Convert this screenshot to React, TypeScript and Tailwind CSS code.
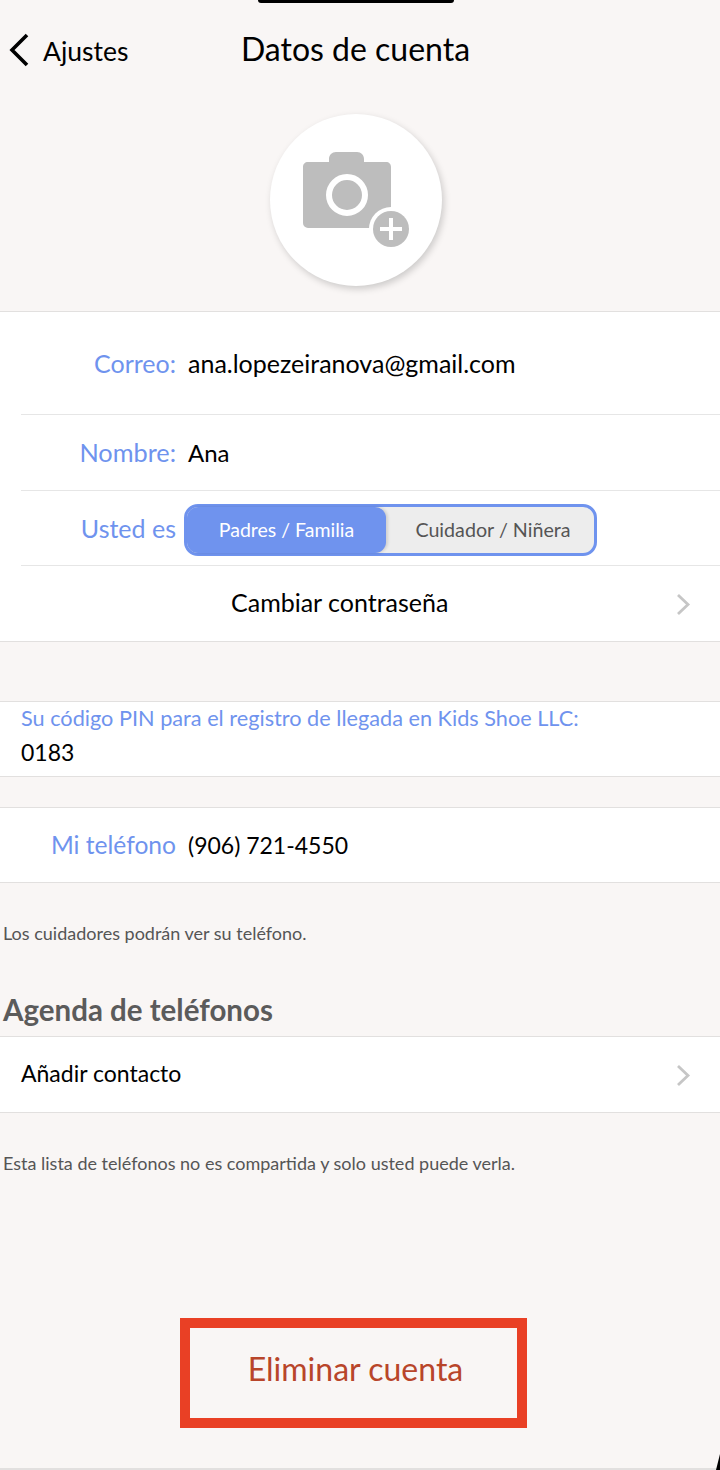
const font = "font-['Lato','Noto_Sans',sans-serif]";

function CameraIcon() {
  return (
    <svg width="116" height="100" viewBox="0 0 116 100" className="block">
      <path
        d="M5 10h21V7c0-4 3-7 7-7h21c4 0 7 3 7 7v3h22c3 0 5 2 5 5v56a5 5 0 0 1-5 5H5a5 5 0 0 1-5-5V15c0-3 2-5 5-5z"
        fill="#bdbdbd"
      />
      <circle cx="44" cy="43" r="18" fill="#bdbdbd" stroke="#fff" stroke-width="6" />
      <circle cx="88" cy="77" r="22" fill="#fff" />
      <circle cx="88" cy="77" r="18" fill="#bdbdbd" />
      <path d="M88 66v22M77 77h22" stroke="#fff" stroke-width="4" />
    </svg>
  );
}

function Chevron() {
  return (
    <svg width="16" height="24" viewBox="0 0 16 24" className="mr-[29px] shrink-0">
      <path d="M3 3l10 9.500L3 22" fill="none" stroke="#c6c6c6" stroke-width="2.800" />
    </svg>
  );
}

function Row({ label, value, labelSize, valueSize, className }: { label: string; value: string; labelSize: string; valueSize: string; className: string }) {
  return (
    <div className={`flex items-center ${className}`}>
      <span className={`w-[176px] shrink-0 text-right text-[#6f93ee] ${labelSize}`}>{label}</span>
      <span className={`ml-[12px] text-black ${valueSize}`}>{value}</span>
    </div>
  );
}

export default function App() {
  return (
    <div className={`relative h-[1470px] w-[720px] overflow-hidden bg-[#f9f6f5] ${font}`}>
      <div className="absolute left-[258px] top-0 h-[3px] w-[196px] rounded-b-lg bg-black" />

      <header className="relative h-[114px]">
        <svg width="24" height="36" viewBox="0 0 24 36" className="absolute left-[7px] top-[32px]">
          <path d="M20 3 5 18l15 15" fill="none" stroke="#000" stroke-width="3.6" />
        </svg>
        <span className="absolute left-[43px] top-[35px] text-[26.500px] leading-[32px] text-black">Ajustes</span>
        <h1 className="pt-[29px] pr-[9px] text-center text-[32px] leading-[40px] font-normal text-black">Datos de cuenta</h1>
      </header>

      <div className="flex h-[197px] justify-center pr-[8px]">
        <div className="flex h-[172px] w-[172px] items-start justify-center rounded-full bg-white pt-[38px] pl-[10px] shadow-[2px_3px_7px_rgba(0,0,0,0.18)]">
          <CameraIcon />
        </div>
      </div>

      <section className="border-y border-[#e2e0df] bg-white">
        <Row label="Correo:" value="ana.lopezeiranova@gmail.com" labelSize="text-[25px]" valueSize="text-[25px]" className="h-[102px] pt-[1px]" />
        <div className="ml-[21px] border-t border-[#e6e6e6]">
          <div className="-ml-[21px]">
            <Row label="Nombre:" value="Ana" labelSize="text-[25.300px]" valueSize="text-[24px]" className="h-[75px]" />
          </div>
        </div>
        <div className="ml-[21px] flex h-[75px] items-center border-t border-[#e6e6e6]">
          <span className="w-[155px] shrink-0 pt-[2px] text-right text-[25px] text-[#6f93ee]">Usted es</span>
          <div className="mt-[4px] ml-[8px] flex h-[52px] w-[413px] rounded-[14px] border-[3px] border-[#6f93ee] bg-[#ededed]">
            <div className="flex w-[199px] items-center justify-center rounded-[11px] bg-[#6f93ee] text-[19.500px] text-white shadow-[2px_0_3px_rgba(0,0,0,0.12)]">
              Padres / Familia
            </div>
            <div className="flex flex-1 items-center justify-center pl-[6px] text-[19.700px] text-[#555555]">Cuidador / Niñera</div>
          </div>
        </div>
        <div className="ml-[21px] flex h-[76px] items-center border-t border-[#e6e6e6]">
          <span className="flex-1 pb-[2px] pl-[210px] text-[25px] text-black">Cambiar contraseña</span>
          <Chevron />
        </div>
      </section>

      <section className="mt-[59px] h-[76px] border-y border-[#e2e0df] bg-white pl-[21px]">
        <p className="pt-[3px] text-[21.700px] leading-[26px] text-[#6f93ee]">
          Su código PIN para el registro de llegada en Kids Shoe LLC:
        </p>
        <p className="pt-[5px] text-[23px] leading-[32px] text-black">0183</p>
      </section>

      <section className="mt-[30px] border-y border-[#e2e0df] bg-white">
        <Row label="Mi teléfono" value="(906) 721-4550" labelSize="text-[24.600px]" valueSize="text-[23px]" className="h-[74px]" />
      </section>

      <p className="mt-[39px] pl-[3px] text-[18px] leading-[22px] text-[#555555]">Los cuidadores podrán ver su teléfono.</p>
      <h2 className="mt-[49px] pl-[3px] text-[29.500px] leading-[34px] font-bold text-[#5b5b5b]">Agenda de teléfonos</h2>

      <section className="mt-[9px] flex h-[77px] items-center border-y border-[#e2e0df] bg-white pl-[21px]">
        <span className="flex-1 pb-[2px] text-[23px] text-black">Añadir contacto</span>
        <Chevron />
      </section>

      <p className="mt-[39px] pl-[3px] text-[18px] leading-[22px] text-[#555555]">
        Esta lista de teléfonos no es compartida y solo usted puede verla.
      </p>

      <div className="mt-[144px] ml-[180px] flex h-[110px] w-[347px] items-center justify-center border-[10px] border-[#e94025] pb-[8px] pl-[4px] text-[32px] text-[#b8452a]">
        Eliminar cuenta
      </div>

      <div className="absolute bottom-0 left-0 h-[2px] w-full bg-[#e2e0df]" />
      <div className="absolute bottom-0 right-0 h-[16px] w-[4px] bg-black [clip-path:polygon(100%_0,100%_100%,0_100%)]" />
    </div>
  );
}
